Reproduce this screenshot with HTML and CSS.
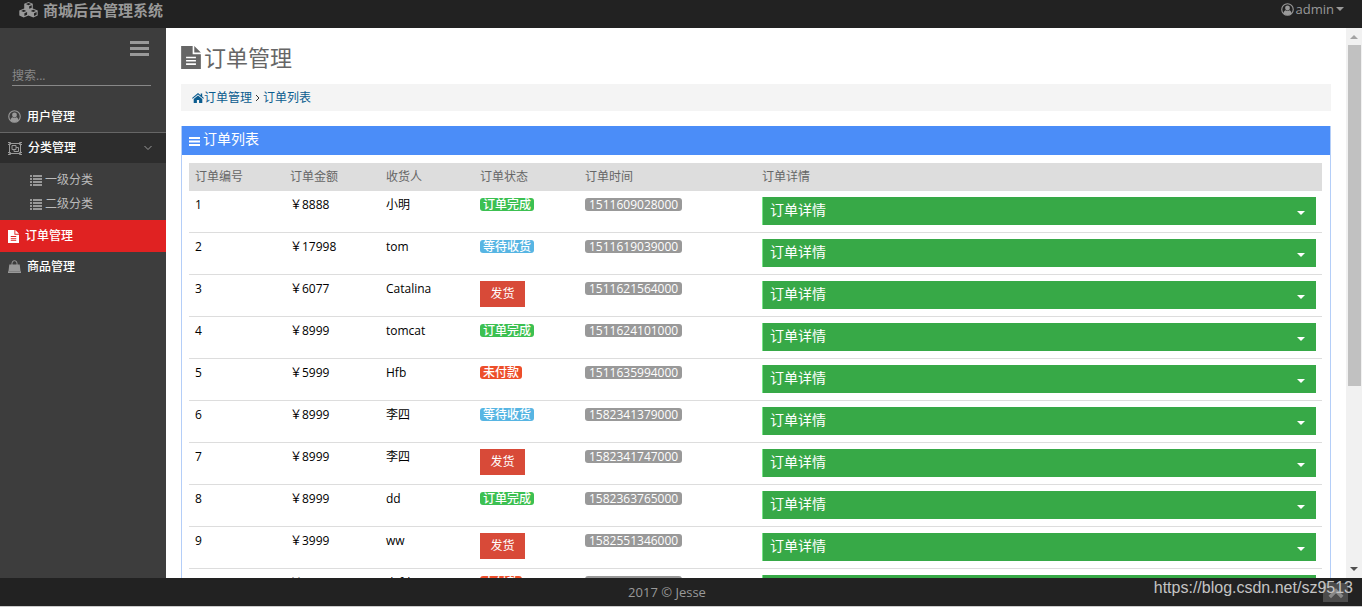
FILE: index.html
```html
<!DOCTYPE html>
<html lang="zh-CN">
<head>
<meta charset="utf-8">
<title>商城后台管理系统</title>
<link rel="stylesheet" href="styles.css">
</head>
<body>
<svg class="sprite" aria-hidden="true">
  <symbol id="i-user" viewBox="0 0 14 14"><circle cx="7" cy="7" r="6.2" fill="none" stroke="currentColor" stroke-width="1.2"/><circle cx="7" cy="5.4" r="2.6"/><path d="M2.600 11.200C2.800 9 4 8 5 7.800c1.200.8 2.800.8 4 0C10 8 11.200 9 11.400 11.200 9 13.600 5 13.600 2.600 11.200z"/></symbol>
  <symbol id="i-file" viewBox="0 0 12 14"><path fill-rule="evenodd" d="M0 0h7v5h5v9H0zM8 0l4 4H8zM3 6.500v1h6v-1zM3 8.500v1h6v-1zM3 10.500v1h6v-1z"/></symbol>
  <symbol id="i-list" viewBox="0 0 12 11"><path d="M0 0h2v2H0zM3 0h9v2H3zM0 3h2v2H0zM3 3h9v2H3zM0 6h2v2H0zM3 6h9v2H3zM0 9h2v2H0zM3 9h9v2H3z"/></symbol>
  <symbol id="i-bars" viewBox="0 0 19 15"><path d="M0 0h19v3H0zM0 6h19v3H0zM0 12h19v3H0z"/></symbol>
</svg>
<header class="topbar">
  <a class="brand" href="#"><svg class="brand-icon" viewBox="0 0 20 18"><path fill-rule="evenodd" d="M10 1l4.300 1.800v4.600l4.900 2v5L14.800 16.500 10 14.400l-4.800 2.100L.8 14.400v-5l4.900-2V2.800zM10 2L7.400 3.100 10 4.200l2.600-1.100zM10.700 5.300v2.500l2.500-1V4.200zM5.200 8.800L2.600 9.900l2.600 1.100 2.600-1.100zM5.900 12.200v2.700l2.700-1.200v-2.700zM14.800 8.800l-2.600 1.100 2.600 1.100 2.600-1.100zM15.500 12.200v2.700l2.600-1.200v-2.700z"/></svg>商城后台管理系统</a>
  <button class="account" type="button"><svg class="icon-13"><use href="#i-user"/></svg><span>admin</span><i class="caret"></i></button>
</header>
<div class="body">
  <aside class="sidebar">
    <button class="toggle" type="button" aria-label="菜单"><svg><use href="#i-bars"/></svg></button>
    <input class="search" type="text" placeholder="搜索..." aria-label="搜索">
    <nav>
      <a class="item" href="#"><svg class="icon-13"><use href="#i-user"/></svg>用户管理</a>
      <a class="item open" href="#"><svg class="icon-group line" viewBox="0 0 14 13"><path d="M1.500 1.500h11v10h-11z"/><path d="M0 .5h2.500v2H0M14 .5h-2.500v2H14M0 12.500h2.500v-2H0M14 12.500h-2.500v-2H14"/><path d="M4 3.500h4v4H4zM8 5.500h2.500v4H6V7.500"/></svg>分类管理<svg class="chevron line" viewBox="0 0 8 6"><path d="M.5 1L4 4.500 7.500 1"/></svg></a>
      <div class="sub">
        <a href="#"><svg><use href="#i-list"/></svg>一级分类</a>
        <a href="#"><svg><use href="#i-list"/></svg>二级分类</a>
      </div>
      <a class="item active" href="#"><svg><use href="#i-file"/></svg>订单管理</a>
      <a class="item last" href="#"><svg class="icon-13" viewBox="0 0 13 13"><path d="M1.300 4.500h10.400L12.500 11H.5zM0 11.300h13V13H0z"/><path d="M4 6V3.200a2.500 2.500 0 0 1 5 0V6" fill="none" stroke="currentColor"/></svg>商品管理</a>
    </nav>
  </aside>
  <main class="content">
    <h1><svg><use href="#i-file"/></svg>订单管理</h1>
    <div class="crumbs"><a href="#"><svg viewBox="0 0 12 10"><path d="M6 0L0 5l.7.8L6 1.500l5.300 4.300L12 5l-1.800-1.500V.5H8.700v1.700zM6 2.500L1.700 6v4h3.200V7h2.200v3h3.200V6z"/></svg>订单管理</a><svg class="sep line" viewBox="0 0 5 8"><path d="M1 1l3 3-3 3"/></svg><a href="#">订单列表</a></div>
    <section class="panel">
      <h2><svg viewBox="0 0 11 9"><path d="M0 0h11v2H0zM0 3.500h11v2H0zM0 7h11v2H0z"/></svg>订单列表</h2>
      <table>
        <thead><tr><th class="c1">订单编号</th><th class="c2">订单金额</th><th class="c3">收货人</th><th class="c4">订单状态</th><th class="c5">订单时间</th><th>订单详情</th></tr></thead>
        <tbody>
          <tr><td>1</td><td>￥8888</td><td>小明</td><td><span class="tag done">订单完成</span></td><td><span class="tag time">1511609028000</span></td><td><button class="detail" type="button">订单详情<i class="caret"></i></button></td></tr>
          <tr><td>2</td><td>￥17998</td><td>tom</td><td><span class="tag wait">等待收货</span></td><td><span class="tag time">1511619039000</span></td><td><button class="detail" type="button">订单详情<i class="caret"></i></button></td></tr>
          <tr><td>3</td><td>￥6077</td><td>Catalina</td><td><button class="send" type="button">发货</button></td><td><span class="tag time">1511621564000</span></td><td><button class="detail" type="button">订单详情<i class="caret"></i></button></td></tr>
          <tr><td>4</td><td>￥8999</td><td>tomcat</td><td><span class="tag done">订单完成</span></td><td><span class="tag time">1511624101000</span></td><td><button class="detail" type="button">订单详情<i class="caret"></i></button></td></tr>
          <tr><td>5</td><td>￥5999</td><td>Hfb</td><td><span class="tag unpaid">未付款</span></td><td><span class="tag time">1511635994000</span></td><td><button class="detail" type="button">订单详情<i class="caret"></i></button></td></tr>
          <tr><td>6</td><td>￥8999</td><td>李四</td><td><span class="tag wait">等待收货</span></td><td><span class="tag time">1582341379000</span></td><td><button class="detail" type="button">订单详情<i class="caret"></i></button></td></tr>
          <tr><td>7</td><td>￥8999</td><td>李四</td><td><button class="send" type="button">发货</button></td><td><span class="tag time">1582341747000</span></td><td><button class="detail" type="button">订单详情<i class="caret"></i></button></td></tr>
          <tr><td>8</td><td>￥8999</td><td>dd</td><td><span class="tag done">订单完成</span></td><td><span class="tag time">1582363765000</span></td><td><button class="detail" type="button">订单详情<i class="caret"></i></button></td></tr>
          <tr><td>9</td><td>￥3999</td><td>ww</td><td><button class="send" type="button">发货</button></td><td><span class="tag time">1582551346000</span></td><td><button class="detail" type="button">订单详情<i class="caret"></i></button></td></tr>
          <tr><td>10</td><td>￥3999</td><td>dsfd</td><td><span class="tag unpaid">未付款</span></td><td><span class="tag time">1582551346000</span></td><td><button class="detail" type="button">订单详情<i class="caret"></i></button></td></tr>
        </tbody>
      </table>
    </section>
  </main>
  <div class="scrollbar" aria-hidden="true"><i class="up"></i><i class="thumb"></i><i class="down"></i></div>
</div>
<footer class="footer">2017 © Jesse<button class="to-top" type="button" aria-label="返回顶部"><svg class="line" viewBox="0 0 18 14"><path d="M2 12l7-7 7 7"/></svg></button><span class="watermark">https://blog.csdn.net/sz9513</span></footer>
</body>
</html>
```
FILE: styles.css
```css
* { box-sizing: border-box; }
body {
  margin: 0;
  height: 100vh;
  display: flex;
  flex-direction: column;
  font: 12px/16px "Open Sans", "Noto Sans CJK SC", sans-serif;
  color: #000;
  background: #fff;
  border-bottom: 1px solid #ccc;
  overflow: hidden;
}
a { color: inherit; text-decoration: none; }
button { font: inherit; color: inherit; border: 0; border-radius: 0; padding: 0; background: none; text-align: left; }
svg { fill: currentColor; flex: none; }
svg.line { fill: none; stroke: currentColor; }
.sprite { position: absolute; width: 0; height: 0; }
.caret { border: 4px solid transparent; border-top-color: currentColor; border-bottom: 0; }
.icon-13 { width: 13px; height: 13px; }

.topbar {
  height: 28px;
  flex: none;
  display: flex;
  justify-content: space-between;
  align-items: flex-start;
  padding: 0 18px;
  background: #222;
  color: #999;
}
.brand { display: flex; align-items: center; gap: 4px; font-size: 15px; line-height: 20px; font-weight: bold; }
.brand-icon { width: 21px; height: 18px; }
.account { display: flex; align-items: center; gap: 2px; font-size: 13px; line-height: 18px; }

.body { flex: 1; min-height: 0; display: flex; }
.sidebar { width: 166px; flex: none; background: #3d3d3d; color: #999; display: flex; flex-direction: column; }
.toggle { align-self: flex-end; margin: 13px 17px 0 0; height: 15px; }
.toggle svg { display: block; width: 19px; height: 15px; }
.search {
  margin: 10px 15px 15px 12px;
  height: 20px;
  min-width: 0;
  padding: 0;
  border: 0;
  border-bottom: 1px solid #888;
  background: none;
  font: inherit;
  color: #ccc;
}
.search::placeholder { color: #888; }
.item { display: flex; align-items: center; gap: 6px; height: 32px; padding: 0 8px; color: #fff; font-weight: 500; border-bottom: 1px solid #666; }
.item svg { color: #999; }
.item.open { background: #2d2d2d; border: 0; height: 30px; }
.icon-group { width: 14px; height: 13px; }
.item .chevron { width: 8px; height: 6px; margin: 0 6px 0 auto; }
.sub { padding: 5px 0 4px 30px; color: #bbb; }
.sub a { display: flex; align-items: center; gap: 3px; height: 24px; }
.sub svg { width: 12px; height: 11px; color: #999; }
.item.active { background: #e02222; border: 0; }
.item.active svg { color: #fff; width: 11px; height: 13px; }
.item.last { height: 29px; border: 0; }

.content { flex: 1; min-width: 0; padding: 14px 15px 0; overflow: hidden; }
h1 { display: flex; align-items: center; gap: 3px; margin: 0 0 12px; font-size: 22px; line-height: 30px; font-weight: 400; color: #666; }
h1 svg { width: 20px; height: 23px; }
.crumbs { display: flex; align-items: center; gap: 3px; height: 27px; padding: 0 11px; background: #f4f4f4; color: #0b5c8f; }
.crumbs a { display: flex; align-items: center; }
.crumbs a svg { width: 12px; height: 10px; }
.sep { width: 5px; height: 8px; color: #333; }
.panel { margin-top: 15px; border: 1px solid #b4cef8; border-top: 0; padding-bottom: 7px; }
h2 { display: flex; align-items: center; gap: 3px; margin: 0 0 8px; padding: 3px 7px 6px; font-size: 14px; line-height: 20px; font-weight: 400; color: #fff; background: #4b8df8; }
h2 svg { width: 11px; height: 9px; margin-top: 5px; }
table { width: calc(100% - 15px); margin-left: 7px; border-collapse: separate; border-spacing: 0; table-layout: fixed; }
th { height: 28px; padding: 0 6px; background: #ddd; color: #666; font-weight: 400; text-align: left; }
.c1 { width: 95px; }
.c2 { width: 96px; }
.c3 { width: 94px; }
.c4 { width: 105px; }
.c5 { width: 177px; }
td { height: 42px; padding: 6px 6px 7px; vertical-align: top; border-bottom: 1px solid #ddd; }
.tag { display: block; width: fit-content; margin-top: 1px; padding: 0 3px; border-radius: 3px; line-height: 13px; color: #fff; font-weight: 500; }
.done { background: #3cc051; }
.wait { background: #57b5e3; }
.unpaid { background: #ed4e2a; }
.time { background: #999; padding: 0 4px; }
.send { display: block; width: 45px; height: 26px; background: #d84a38; color: #fff; text-align: center; }
.detail { display: flex; justify-content: space-between; align-items: center; width: 100%; height: 28px; padding: 0 11px 2px 7px; background: #37a947; border-left: 1px solid #77e588; color: #fff; font-size: 14px; }
.detail .caret { margin-top: 6px; }

.scrollbar { width: 16px; flex: none; display: flex; flex-direction: column; align-items: center; background: #f1f1f1; }
.up { margin: 7px 0 6px; border: 4px solid transparent; border-bottom-color: #a3a3a3; border-top: 0; }
.thumb { width: 13px; height: 62%; background: #c1c1c1; }
.down { margin: auto 0 7px; border: 4px solid transparent; border-top-color: #505050; border-bottom: 0; }

.footer { position: relative; height: 28px; flex: none; padding-right: 28px; background: #222; color: #999; text-align: center; font-size: 13px; line-height: 28px; }
.to-top { position: absolute; right: 14px; bottom: 4px; width: 25px; height: 19px; background: #4c4c4c; color: #888; display: flex; align-items: center; justify-content: center; }
.to-top svg { width: 16px; height: 13px; stroke-width: 4px; }
.watermark { position: absolute; right: 9px; top: 0; font: 16px/20px "Liberation Sans", Arial, sans-serif; color: #c4c4c4; }
```
